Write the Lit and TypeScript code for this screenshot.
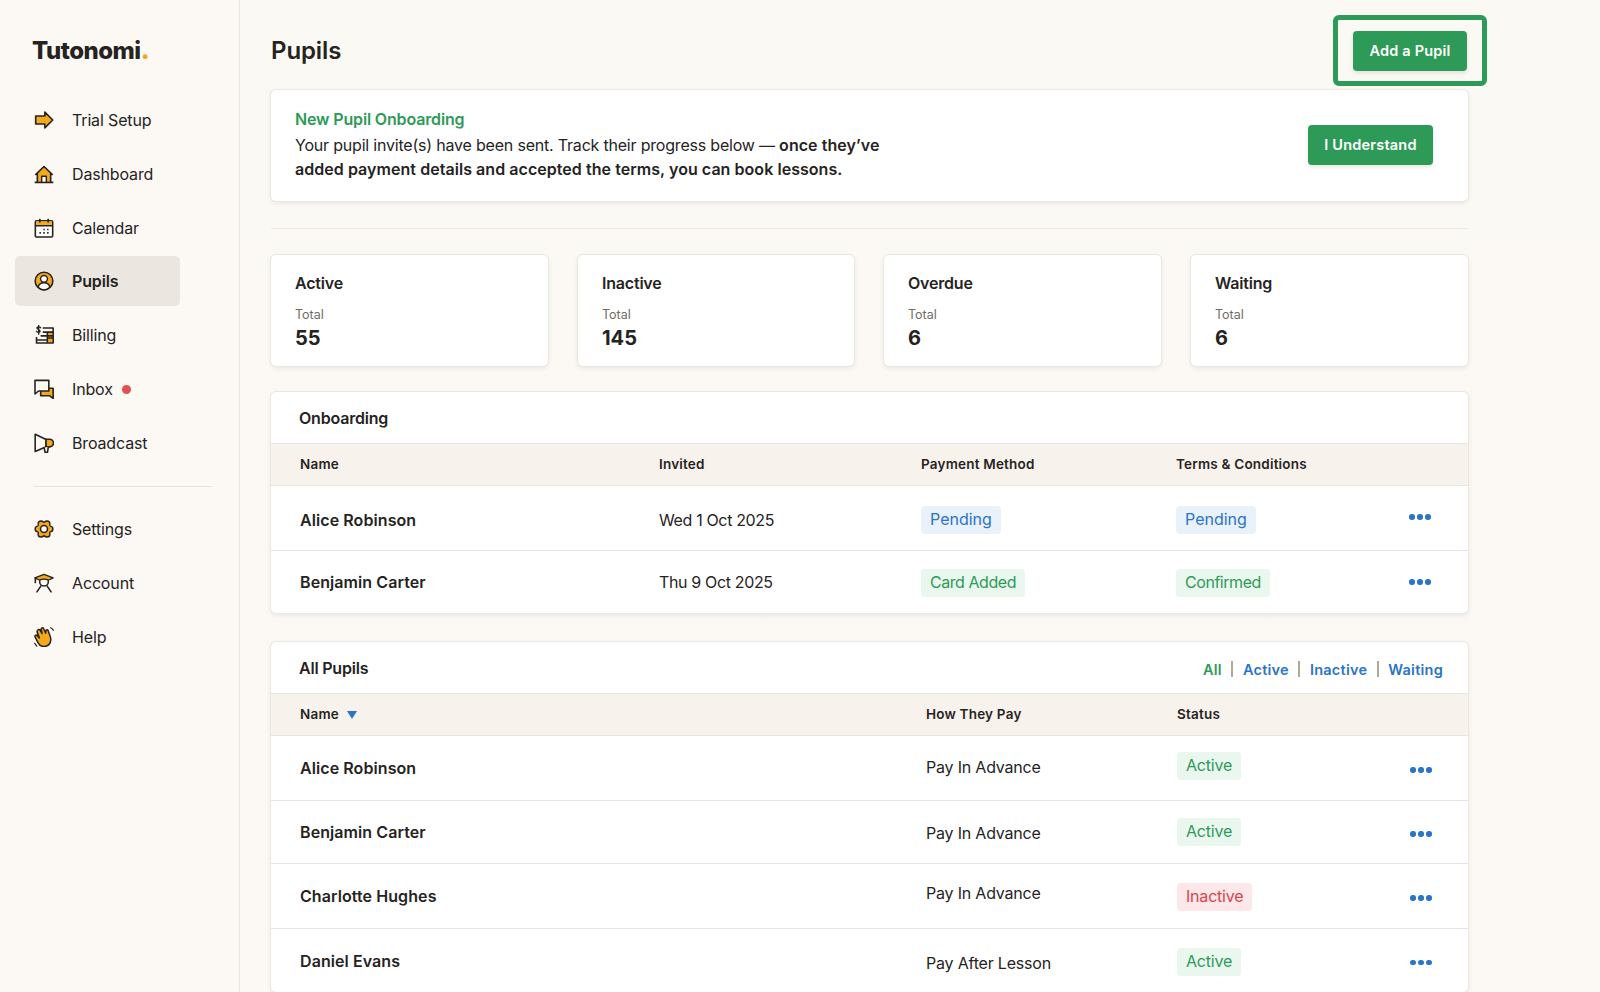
import { LitElement, html, css, svg } from "lit";
import { customElement } from "lit/decorators.js";

const D = "#26231f";
const O = "#f5a81c";

const lobes = [0, 60, 120, 180, 240, 300].map((a) => [
  12 + 7.2 * Math.cos((a * Math.PI) / 180),
  12 + 7.2 * Math.sin((a * Math.PI) / 180),
]);

const icons: Record<string, unknown> = {
  arrow: svg`<path d="M2 7.2h11V2.5L22.5 12 13 21.5v-4.7H2z" fill="${O}" stroke="${D}" stroke-width="1.9" stroke-linejoin="round"/>`,
  home: svg`<path d="M4 21v-9.5L12 3.5l8 8V21z" fill="${O}"/><path d="M1.6 13 12 3l10.4 10M4 11v10M20 11v10M.8 22h22.4M9.3 21.5v-6.7h5.4v6.7" fill="none" stroke="${D}" stroke-width="1.9" stroke-linejoin="round"/><path d="M10.2 15.7h3.6V21h-3.6z" fill="#fff"/>`,
  calendar: svg`<rect x="1.6" y="3.2" width="20.8" height="19.6" rx="1.6" fill="#fff" stroke="${D}" stroke-width="1.9"/><path d="M2.5 4.1h19v5h-19z" fill="${O}"/><path d="M1.6 9.3h20.8M7 .8v4.6M17 .8v4.6" stroke="${D}" stroke-width="1.9" fill="none"/><path d="M6.5 17.8h1.8M11.1 17.8h1.8M15.7 17.8h1.8M11.1 13.8h1.8M15.7 13.8h1.8" stroke="${D}" stroke-width="2"/>`,
  user: svg`<circle cx="12" cy="12" r="10.6" fill="${O}" stroke="${D}" stroke-width="1.9"/><path d="M5 19.4c.8-3.8 3.6-5.4 7-5.4s6.2 1.6 7 5.4a10.6 10.6 0 0 1-7 3.2 10.6 10.6 0 0 1-7-3.2z" fill="#fff" stroke="${D}" stroke-width="1.7"/><circle cx="12" cy="9.4" r="4.1" fill="#fff" stroke="${D}" stroke-width="1.7"/>`,
  billing: svg`<path d="M16 9h6.5v12H16z" fill="${O}"/><path d="M10.5 3.5H23V21.5H3V14.5M10.5 8.5H23M8 13H23M16 8.5V21.5M16 15.5H23M3 18H16" fill="none" stroke="${D}" stroke-width="1.9" stroke-linejoin="round"/><path d="M8 3.4C7.4 2 4.2 1.8 3.6 3.3c-.7 2 4 2.2 3.6 4.3C6.9 9.2 3.7 9.1 3 7.5M5.6.6V11" fill="none" stroke="${D}" stroke-width="1.6" stroke-linecap="round"/>`,
  inbox: svg`<path d="M8 11h15v12.4l-4.4-3.4H8z" fill="${O}" stroke="${D}" stroke-width="1.9" stroke-linejoin="round"/><path d="M1.2 1.6h16.6v12.8H5.4L1.2 18z" fill="#fcf9f5" stroke="${D}" stroke-width="1.9" stroke-linejoin="round"/>`,
  broadcast: svg`<path d="M1.4 1.4 14.5 7.8v8.6L1.4 22.2z" fill="#fcf9f5" stroke="${D}" stroke-width="1.9" stroke-linejoin="round"/><path d="M14.5 7.4h4.2a4.6 4.6 0 0 1 0 9.2h-4.2z" fill="${O}" stroke="${D}" stroke-width="1.9"/><path d="m12.2 17.6 1 5.4h3l1-6.4" fill="#fcf9f5" stroke="${D}" stroke-width="1.9" stroke-linejoin="round"/>`,
  gear: svg`${lobes.map(([x, y]) => svg`<circle cx="${x}" cy="${y}" r="4.3" fill="${D}"/>`)}${lobes.map(([x, y]) => svg`<circle cx="${x}" cy="${y}" r="2.6" fill="${O}"/>`)}<circle cx="12" cy="12" r="7.6" fill="${O}"/><circle cx="12" cy="12" r="4.2" fill="#fcf9f5" stroke="${D}" stroke-width="1.9"/>`,
  account: svg`<circle cx="12" cy="10.5" r="5.2" fill="#fcf9f5" stroke="${D}" stroke-width="1.8"/><path d="M1 5.8 12 1.6 23 5.8 17.6 8.4C14.5 7.4 9.5 7.4 6.4 8.4z" fill="${O}" stroke="${D}" stroke-width="1.5" stroke-linejoin="round"/><path d="M1.6 6.2V11.5M8.4 15.5 3.5 22.6M15.6 15.5l4.9 7.1" fill="none" stroke="${D}" stroke-width="1.9" stroke-linecap="round"/>`,
  wave: svg`<g transform="translate(-1.4 -1.6) scale(1.12)"><path d="M5.4 4.6c.9-1 2-.4 2.5.5l2 3.3-.9-4.5c-.3-1.5 1.7-2.3 2.5-.8l2.3 5 .2-2.7c.1-1.5 2.3-1.5 2.5.1.3 1.6 2.8 6.2 2.8 9.3 0 4.6-3.3 7.6-7.2 7.6-3.3 0-5.3-1.7-6.6-4.2L2.4 12c-.8-1.4 1-2.7 2.1-1.6L7 13.1 4.7 7.2c-.3-1 0-2 .7-2.6z" fill="${O}" stroke="${D}" stroke-width="1.6" stroke-linejoin="round"/></g><path d="M20 .8c1.5.6 2.6 1.7 3.2 3.2M.8 19.6l2.6 3.4" fill="none" stroke="${D}" stroke-width="1.4" stroke-linecap="round"/>`,
};

const nav = [
  { i: "arrow", t: "Trial Setup" },
  { i: "home", t: "Dashboard" },
  { i: "calendar", t: "Calendar" },
  { i: "user", t: "Pupils", active: true },
  { i: "billing", t: "Billing" },
  { i: "inbox", t: "Inbox", dot: true },
  { i: "broadcast", t: "Broadcast" },
];
const nav2 = [
  { i: "gear", t: "Settings" },
  { i: "account", t: "Account" },
  { i: "wave", t: "Help" },
];

const stats = [
  ["Active", "55"],
  ["Inactive", "145"],
  ["Overdue", "6"],
  ["Waiting", "6"],
];

const pupils = [
  { n: "Alice Robinson", p: "Pay In Advance", s: "Active", c: "green", dp: -1, db: -2, dm: 2, h: "tall" },
  { n: "Benjamin Carter", p: "Pay In Advance", s: "Active", c: "green", dp: 1, db: 0, dm: 2, h: "mid" },
  { n: "Charlotte Hughes", p: "Pay In Advance", s: "Inactive", c: "red", dp: -3, db: 1, dm: 2, h: "tall" },
  { n: "Daniel Evans", p: "Pay After Lesson", s: "Active", c: "green", dp: 2, db: 1, dm: 2, h: "mid" },
];

const nudge = (y: number) => `transform: translateY(${y}px)`;

@customElement("app-root")
export class AppRoot extends LitElement {
  static styles = css`
    :host {
      display: flex;
      height: 100vh;
      overflow: hidden;
      background: linear-gradient(180deg, #fbf9f4, #fcf8f4);
      font-family: "Inter", "Liberation Sans", sans-serif;
      color: #26231f;
      font-size: 16px;
    }
    .side {
      width: 240px;
      flex: none;
      box-sizing: border-box;
      border-right: 1px solid #e8e4de;
      padding: 36px 0 0 15px;
      background: #fcf9f5;
    }
    .logo {
      font-size: 24px;
      font-weight: 800;
      letter-spacing: -0.5px;
      line-height: 30px;
      padding-left: 17px;
      margin-bottom: 28.5px;
    }
    .logo b { color: #f5a81c; }
    .item {
      width: 165px;
      height: 50px;
      margin-bottom: 4px;
      box-sizing: border-box;
      padding-left: 19px;
      display: flex;
      align-items: center;
      border-radius: 5px;
      font-size: 16px;
      letter-spacing: -0.15px;
    }
    .item:nth-child(4) { margin-bottom: 3px; }
    .item svg { width: 20px; height: 20px; flex: none; margin-right: 18px; }
    .item.active { background: #ebe6e0; font-weight: 600; }
    .dot { width: 9px; height: 9px; border-radius: 50%; background: #e25050; margin-left: 9px; margin-top: 1px; }
    .sep { height: 1px; background: #e8e4de; width: 178px; margin: 18px 0 17px 19px; }
    .main {
      flex: 1;
      min-width: 0;
      box-sizing: border-box;
      padding: 0 132px 0 31px;
    }
    .top {
      height: 90px;
      display: flex;
      align-items: center;
      justify-content: space-between;
      padding: 12px 1px 0 0;
      box-sizing: border-box;
    }
    .title { font-size: 24px; font-weight: 600; letter-spacing: -0.1px; margin-top: -1px; }
    .btn {
      background: #2e9a57;
      color: #fff;
      border: none;
      border-radius: 4px;
      font: inherit;
      font-weight: 600;
      font-size: 14.5px;
      letter-spacing: 0.2px;
      height: 40px;
      box-shadow: 0 2px 4px rgba(0,0,0,.1);
      display: flex;
      align-items: center;
      justify-content: center;
      box-sizing: border-box;
      padding-bottom: 1px;
    }
    .add { position: relative; width: 114px; }
    .add::after {
      content: "";
      position: absolute;
      inset: -16px -20px -15px -20px;
      border: 5px solid #2e9a57;
      border-radius: 6px;
    }
    .card {
      background: #fff;
      border-radius: 5px;
      box-shadow: 0 0 0 1px #ebe7e1, 0 2px 5px rgba(60,50,40,.1);
    }
    .banner {
      height: 111px;
      display: flex;
      align-items: center;
      justify-content: space-between;
      padding: 0 35px 0 24px;
      box-sizing: border-box;
    }
    .btext { padding-bottom: 4px; }
    .bt { color: #2e9a57; font-weight: 600; font-size: 16px; letter-spacing: -0.15px; line-height: 24px; margin-bottom: 2px; }
    .bd { font-size: 16px; line-height: 24px; letter-spacing: -0.2px; width: 610px; }
    .bd b { font-weight: 600; letter-spacing: 0.05px; }
    .under { width: 125px; margin-top: -1px; }
    hr { border: none; height: 1px; background: #eee9e3; margin: 27px 0 26px; }
    .stats { display: grid; grid-template-columns: 277px 276px 277px 277px; gap: 30px; margin-bottom: 26px; }
    .stat { height: 111px; box-sizing: border-box; padding: 17px 24px; }
    .sl { font-weight: 600; font-size: 16px; line-height: 22px; letter-spacing: -0.2px; }
    .st { font-size: 12.5px; color: #6f6b66; margin-top: 13px; line-height: 16px; }
    .sv { font-size: 20px; font-weight: 700; line-height: 26px; margin-top: 2px; }
    .tbl { margin-bottom: 29px; }
    .tb-head {
      height: 52px;
      box-sizing: border-box;
      display: flex;
      align-items: center;
      justify-content: space-between;
      padding: 0 25px 0 28px;
      font-weight: 600;
      font-size: 16px;
      letter-spacing: -0.2px;
      border-bottom: 1px solid #e8e4de;
    }
    .filters { display: flex; align-items: center; font-size: 14.5px; letter-spacing: 0.25px; color: #2a74c9; margin-top: 3px; }
    .filters i { width: 2px; height: 16px; background: #b5a797; margin: 0 9.5px; }
    .filters .on { color: #2e9a57; }
    .row {
      display: grid;
      align-items: center;
      padding-left: 29px;
      box-sizing: border-box;
      border-bottom: 1px solid #e8e4de;
    }
    .row:last-child { border-bottom: none; }
    .on3 { grid-template-columns: 359px 262px 255px 232px 1fr; }
    .all3 { grid-template-columns: 626px 251px 232px 1fr; }
    .th {
      height: 42px;
      padding-bottom: 2px;
      background: #f7f3ec;
      font-weight: 600;
      font-size: 13.5px;
      letter-spacing: 0.2px;
    }
    .r { font-size: 16px; letter-spacing: -0.2px; }
    .r.tall { height: 65px; }
    .r.mid { height: 63px; }
    .r.low { height: 62px; }
    .name { font-weight: 600; letter-spacing: 0.08px; }
    .date { letter-spacing: -0.35px; }
    .badge {
      display: inline-block;
      padding: 0 9px;
      height: 28px;
      line-height: 27px;
      border-radius: 4px;
      font-size: 16px;
      letter-spacing: -0.2px;
    }
    .blue { background: #e9f1fb; color: #2a74c9; letter-spacing: 0; }
    .green { background: #e9f7ef; color: #2e9a57; }
    .red { background: #fde7e8; color: #d64550; }
    .tight { letter-spacing: -0.45px; }
    .more { display: flex; gap: 2.5px; margin-left: 1px; }
    .more span { width: 5.5px; height: 5.5px; border-radius: 50%; background: #2a74c9; }
    .sort { display: inline-block; margin-left: 8px; width: 0; height: 0; border-left: 5px solid transparent; border-right: 5px solid transparent; border-top: 8px solid #2a74c9; }
  `;

  private more(y: number) {
    return html`<div class="more" style=${nudge(y)}><span></span><span></span><span></span></div>`;
  }

  private navItem(n: { i: string; t: string; active?: boolean; dot?: boolean }) {
    return html`<div class="item ${n.active ? "active" : ""}">
      <svg viewBox="0 0 24 24">${icons[n.i]}</svg><span>${n.t}</span>${n.dot ? html`<span class="dot"></span>` : ""}
    </div>`;
  }

  render() {
    return html`
      <aside class="side">
        <div class="logo">Tutonomi<b>.</b></div>
        ${nav.map((n) => this.navItem(n))}
        <div class="sep"></div>
        ${nav2.map((n) => this.navItem(n))}
      </aside>
      <main class="main">
        <div class="top">
          <div class="title">Pupils</div>
          <div class="btn add">Add a Pupil</div>
        </div>
        <section class="card banner">
          <div class="btext">
            <div class="bt">New Pupil Onboarding</div>
            <div class="bd">Your pupil invite(s) have been sent. Track their progress below — <b>once they’ve added payment details and accepted the terms, you can book lessons.</b></div>
          </div>
          <div class="btn under">I Understand</div>
        </section>
        <hr />
        <section class="stats">
          ${stats.map(
            ([l, v]) => html`<div class="card stat"><div class="sl">${l}</div><div class="st">Total</div><div class="sv">${v}</div></div>`
          )}
        </section>
        <section class="card tbl">
          <div class="tb-head">Onboarding</div>
          <div class="row on3 th"><div>Name</div><div>Invited</div><div>Payment Method</div><div>Terms &amp; Conditions</div><div></div></div>
          <div class="row on3 r tall">
            <div class="name" style=${nudge(1.5)}>Alice Robinson</div><div class="date" style=${nudge(1.5)}>Wed 1 Oct 2025</div>
            <div style=${nudge(2)}><span class="badge blue">Pending</span></div><div style=${nudge(2)}><span class="badge blue">Pending</span></div>${this.more(-1)}
          </div>
          <div class="row on3 r low">
            <div class="name">Benjamin Carter</div><div class="date">Thu 9 Oct 2025</div>
            <div style=${nudge(1)}><span class="badge green tight">Card Added</span></div><div style=${nudge(1)}><span class="badge green tight">Confirmed</span></div>${this.more(0)}
          </div>
        </section>
        <section class="card tbl">
          <div class="tb-head">All Pupils
            <div class="filters"><span class="on">All</span><i></i><span>Active</span><i></i><span>Inactive</span><i></i><span>Waiting</span></div>
          </div>
          <div class="row all3 th"><div>Name<span class="sort"></span></div><div>How They Pay</div><div>Status</div><div></div></div>
          ${pupils.map(
            (r) => html`<div class="row all3 r ${r.h}">
              <div class="name">${r.n}</div><div style=${nudge(r.dp)}>${r.p}</div>
              <div style=${nudge(r.db)}><span class="badge ${r.c}">${r.s}</span></div>${this.more(r.dm)}
            </div>`
          )}
        </section>
      </main>
    `;
  }
}
